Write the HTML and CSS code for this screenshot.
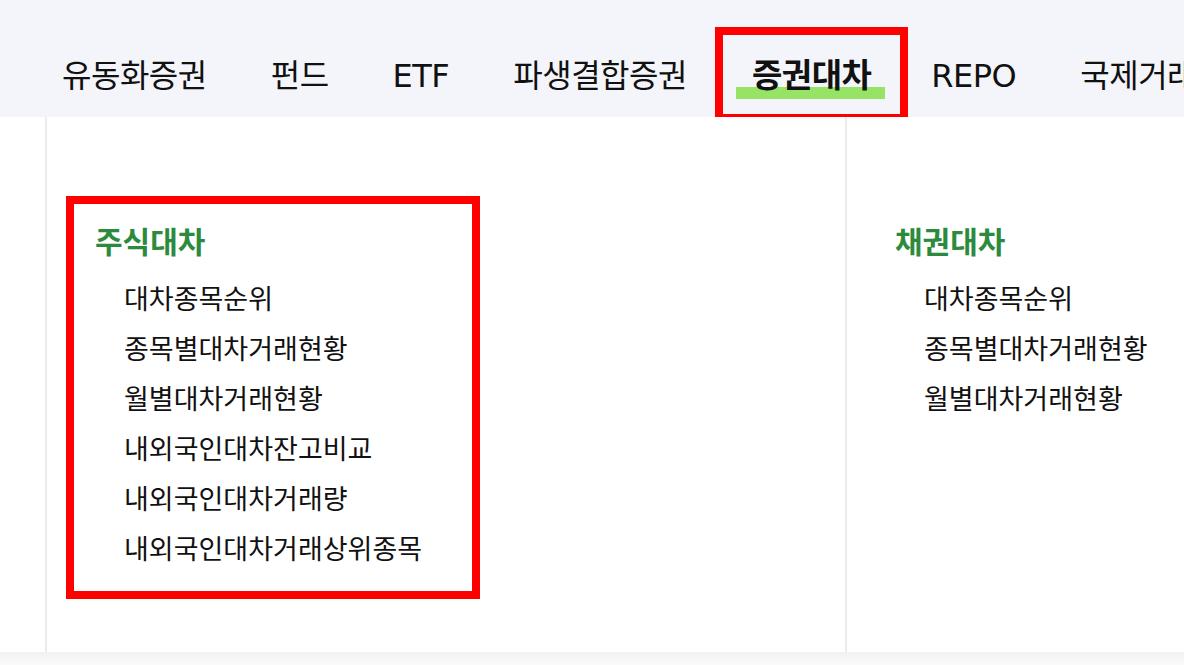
FILE: index.html
```html
<!DOCTYPE html>
<html lang="ko">
<head>
<meta charset="utf-8">
<title>증권대차</title>
<link rel="stylesheet" href="styles.css">
</head>
<body>
<nav class="gnb">
  <ul class="gnb-list">
    <li class="gnb-item"><span class="gnb-label">유동화증권</span></li>
    <li class="gnb-item"><span class="gnb-label">펀드</span></li>
    <li class="gnb-item"><span class="gnb-label">ETF</span></li>
    <li class="gnb-item"><span class="gnb-label">파생결합증권</span></li>
    <li class="gnb-item is-active"><span class="gnb-label">증권대차</span></li>
    <li class="gnb-item"><span class="gnb-label">REPO</span></li>
    <li class="gnb-item"><span class="gnb-label">국제거래</span></li>
  </ul>
</nav>
<section class="panel">
  <div class="col">
    <div class="group is-marked">
      <h3 class="group-title">주식대차</h3>
      <ul class="group-list">
        <li>대차종목순위</li>
        <li>종목별대차거래현황</li>
        <li>월별대차거래현황</li>
        <li>내외국인대차잔고비교</li>
        <li>내외국인대차거래량</li>
        <li>내외국인대차거래상위종목</li>
      </ul>
    </div>
  </div>
  <div class="col">
    <div class="group">
      <h3 class="group-title">채권대차</h3>
      <ul class="group-list">
        <li>대차종목순위</li>
        <li>종목별대차거래현황</li>
        <li>월별대차거래현황</li>
      </ul>
    </div>
  </div>
</section>
<div class="page-bottom"></div>
</body>
</html>
```

FILE: styles.css
```css
html, body {
  margin: 0;
  padding: 0;
  overflow: hidden;
  width: 1184px;
  height: 665px;
  background: #ffffff;
  font-family: "Noto Sans CJK KR", sans-serif;
  color: #111111;
}

.gnb {
  height: 117px;
  background: #f4f5fa;
  box-sizing: border-box;
  padding: 35px 0 0 33px;
  overflow: hidden;
}

.gnb-list {
  list-style: none;
  margin: 0;
  padding: 0;
  display: flex;
  gap: 6px;
  white-space: nowrap;
}

.gnb-item {
  flex: 0 0 auto;
  height: 79px;
  padding: 0 29px;
  display: flex;
  align-items: center;
  font-family: "DejaVu Sans", "Noto Sans CJK KR", sans-serif;
  font-size: 32px;
  letter-spacing: -0.5px;
  color: #111111;
  position: relative;
  z-index: 0;
}

.gnb-label {
  position: relative;
  line-height: 40px;
  padding-top: 2px;
}

.gnb-item.is-active {
  font-size: 33px;
  font-weight: 700;
  margin: 0 -4px 0 1px;
  outline: 8px solid #ff0000;
}

.gnb-item.is-active .gnb-label::after {
  content: "";
  position: absolute;
  left: -16px;
  right: -14px;
  bottom: -3px;
  height: 12px;
  background: #97e366;
  z-index: -1;
}

.panel {
  display: flex;
  height: 535px;
  padding-left: 45px;
  background: #ffffff;
}

.col {
  flex: 0 0 800px;
  box-sizing: border-box;
  border-left: 2px solid #ebebeb;
  padding: 87px 0 0 27px;
}

.group {
  width: 398px;
  box-sizing: border-box;
  padding: 18px 0 18px 21px;
}

.group.is-marked {
  outline: 8px solid #ff0000;
}

.group-title {
  margin: 0 0 15px;
  font-size: 30px;
  line-height: 36px;
  font-weight: 700;
  color: #2c8a3c;
}

.group-list {
  list-style: none;
  margin: 0;
  padding: 0 0 0 29px;
}

.group-list li {
  font-size: 27px;
  line-height: 50px;
  color: #111111;
}

.page-bottom {
  height: 13px;
  background: linear-gradient(#f1f1f1, #fafafa);
}
```
